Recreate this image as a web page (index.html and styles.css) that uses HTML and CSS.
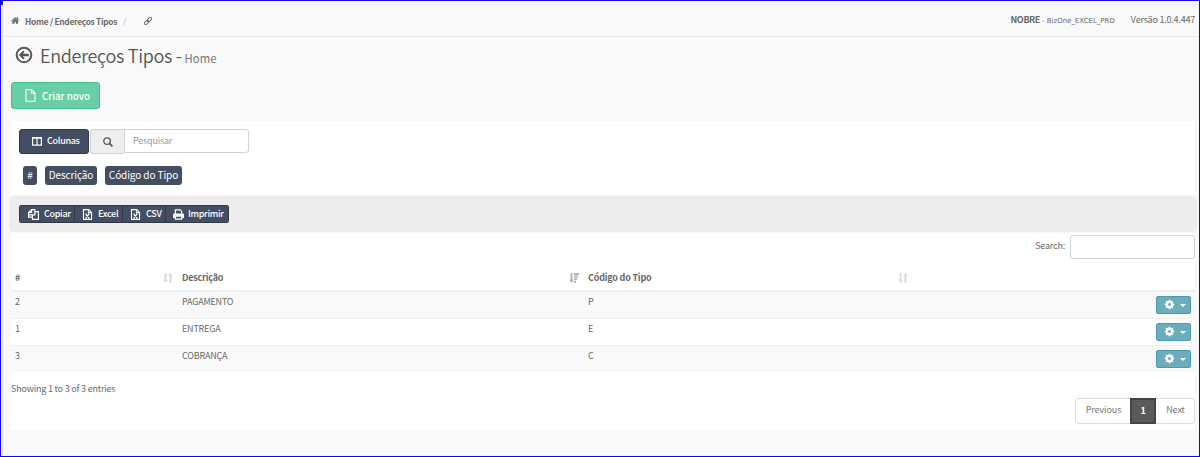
FILE: index.html
```html
<!DOCTYPE html>
<html lang="pt-BR">
<head>
<meta charset="utf-8">
<title>Endereços Tipos</title>
<link rel="stylesheet" href="styles.css">
</head>
<body>
<svg class="defs" width="0" height="0">
  <symbol id="home" viewBox="0 0 1792 1792"><path d="M1408 992v480q0 26-19 45t-45 19h-384v-384h-256v384h-384q-26 0-45-19t-19-45v-480q0-1 .5-3t.5-3l575-474 575 474q1 2 1 6zm223-69l-62 74q-8 9-21 11h-3q-13 0-21-7l-692-577-692 577q-12 8-24 7-13-2-21-11l-62-74q-8-10-7-23.500t11-21.500l719-599q32-26 76-26t76 26l244 204v-195q0-14 9-23t23-9h192q14 0 23 9t9 23v408l219 182q10 8 11 21.500t-7 23.500z"/></symbol>
  <symbol id="cog" viewBox="0 0 1792 1792"><path d="M1152 896q0-106-75-181t-181-75-181 75-75 181 75 181 181 75 181-75 75-181zm512-109v222q0 12-8 23t-20 13l-185 28q-19 54-39 91 35 50 107 138 10 12 10 25t-9 23q-27 37-99 108t-94 71q-12 0-26-9l-138-108q-44 23-91 38-16 136-29 186-7 28-36 28h-222q-14 0-24.500-8.500t-11.500-21.500l-28-184q-49-16-90-37l-141 107q-10 9-25 9-14 0-25-11-126-114-165-168-7-10-7-23 0-12 8-23 15-21 51-66.500t54-70.500q-27-50-41-99l-183-27q-13-2-21-12.500t-8-23.500v-222q0-12 8-23t19-13l186-28q14-46 39-92-40-57-107-138-10-12-10-24 0-10 9-23 26-36 98.500-107.500t94.500-71.500q13 0 26 10l138 107q44-23 91-38 16-136 29-186 7-28 36-28h222q14 0 24.500 8.500t11.500 21.500l28 184q49 16 90 37l142-107q9-9 24-9 13 0 25 10 129 119 165 170 7 8 7 22 0 12-8 23-15 21-51 66.500t-54 70.500q26 50 41 98l183 28q13 2 21 12.500t8 23.500z"/></symbol>
  <symbol id="sort" viewBox="0 0 10 10"><path d="M1.500 0h2v6.800h1.500L2.500 10 0 6.800h1.500zM6.500 10h2V3.200H10L7.500 0 5 3.200h1.500z"/></symbol>
  <symbol id="sort-desc" viewBox="0 0 10 10"><path d="M1.500 0h2v6.800h1.500L2.500 10 0 6.800h1.500zM5 0h5v2H5zM5 2.600h4v2H5zM5 5.300h3v2H5zM5 8h2v2H5z"/></symbol>
  <symbol id="excel" viewBox="0 0 10 11"><path d="M1 .6h5.200L9 3.400v7H1zM6 .6v3h3M3.300 5.100l3.200 3.800M6.500 5.100 3.300 8.900M2.900 9h1.400M5.500 9h1.400M2.900 5h1.400M5.500 5h1.400" fill="none" stroke="currentColor" stroke-width="1.200"/></symbol>
</svg>
<div class="page">
  <div class="rail"><i class="rail-head"></i><i></i><i></i><i></i><i></i><i></i><i></i><i></i><i></i><i></i><i></i><i></i></div>
  <div class="main">
    <header class="topbar">
      <nav class="crumbs">
        <svg class="i-home"><use href="#home"/></svg>
        <b>Home / Endereços Tipos</b><span class="slash">/</span>
        <svg class="i-link" viewBox="0 0 10 10"><g fill="none" stroke="currentColor" stroke-width="1.200" transform="rotate(-45 5 5)"><rect x="-.8" y="3.300" width="6.400" height="3.400" rx="1.700"/><rect x="4.400" y="3.300" width="6.400" height="3.400" rx="1.700"/></g></svg>
      </nav>
      <div class="env"><b>NOBRE</b><span class="db">- BizOne_EXCEL_PRD</span><span class="version">Versão 1.0.4.447</span></div>
    </header>
    <h1 class="title">
      <svg class="i-back" viewBox="0 0 18 18"><circle cx="9" cy="9" r="7.300" fill="none" stroke="currentColor" stroke-width="2"/><path d="M3.800 9 8.300 4.600l1.300 1.300-1.900 1.900h6v2.400h-6l1.900 1.900-1.300 1.300z"/></svg>
      <span class="name">Endereços Tipos -</span><small>Home</small>
    </h1>
    <button class="create"><svg class="i-file" viewBox="0 0 11 13"><path d="M1 .7h5.600L10 4.100v8.200H1zM6.500.7v3.500H10" fill="none" stroke="currentColor" stroke-width="1.100"/></svg><span>Criar novo</span></button>
    <section class="panel">
      <div class="filters">
        <button class="columns"><svg class="i-cols" viewBox="0 0 10 9"><path d="M.6.600h8.800v7.600H.6zM5 .6v7.600M.6 1.100h8.800" fill="none" stroke="currentColor" stroke-width="1.200"/></svg><span>Colunas</span></button>
        <div class="find"><span class="addon"><svg class="i-search" viewBox="0 0 10 10"><path d="M6.700 6.700 9.400 9.400" stroke="currentColor" stroke-width="1.700"/><circle cx="4.100" cy="4.100" r="3.300" fill="none" stroke="currentColor" stroke-width="1.300"/></svg></span><div class="field">Pesquisar</div></div>
      </div>
      <div class="tags"><span class="t1">#</span><span class="t2">Descrição</span><span class="t3">Código do Tipo</span></div>
      <div class="tools">
        <div class="group">
          <button class="g1"><svg viewBox="0 0 11 11"><path d="M3.600.6h3.200v5.300H.6V3.400zM3.600.6v2.800h-3M.6 5v3.200h3.900M7 2.600h3.400v7.800H4.500V6M7 2.600v3" fill="none" stroke="currentColor" stroke-width="1.200"/></svg><span>Copiar</span></button>
          <button class="g2"><svg><use href="#excel"/></svg><span>Excel</span></button>
          <button class="g3"><svg><use href="#excel"/></svg><span>CSV</span></button>
          <button class="g4"><svg viewBox="0 0 11 11"><path d="M2.300 5V.9h4.900l1.500 1.500V5" fill="none" stroke="currentColor" stroke-width="1.200"/><path d="M1.500 4.600h8Q11 4.600 11 6v3H9.300v1.700H1.700V9H0V6q0-1.400 1.500-1.400zM2.900 7.700v1.900h5.200V7.700z" fill-rule="evenodd"/></svg><span>Imprimir</span></button>
        </div>
      </div>
      <div class="search"><span>Search:</span><div class="box"></div></div>
      <div class="table">
        <div class="row head"><div class="c1">#<svg class="light"><use href="#sort"/></svg></div><div class="c2">Descrição<svg class="dark"><use href="#sort-desc"/></svg></div><div class="c3">Código do Tipo<svg class="light"><use href="#sort"/></svg></div></div>
        <div class="row odd"><div class="c1">2</div><div class="c2">PAGAMENTO</div><div class="c3">P</div><button class="action"><svg><use href="#cog"/></svg><i></i></button></div>
        <div class="row"><div class="c1">1</div><div class="c2">ENTREGA</div><div class="c3">E</div><button class="action"><svg><use href="#cog"/></svg><i></i></button></div>
        <div class="row odd"><div class="c1">3</div><div class="c2">COBRANÇA</div><div class="c3">C</div><button class="action"><svg><use href="#cog"/></svg><i></i></button></div>
      </div>
      <div class="info">Showing 1 to 3 of 3 entries</div>
      <div class="pager"><span class="prev">Previous</span><b>1</b><span class="next">Next</span></div>
    </section>
  </div>
</div>
</body>
</html>
```
FILE: styles.css
```css
* { box-sizing: border-box; }
body { margin: 0; font: 9px/14px "Noto Sans CJK SC", "Open Sans", sans-serif; letter-spacing: -.2px; color: #6a6a6a; }
button { margin: 0; padding: 0; font: inherit; letter-spacing: inherit; color: #fff; display: flex; align-items: center; white-space: nowrap; }
svg { display: block; flex: none; fill: currentColor; }
span, b { white-space: nowrap; }
.defs { position: absolute; }
.page { width: 1200px; height: 457px; border: 1px solid #1400ff; background: #f9f9f9; display: flex; overflow: hidden; }
.rail { width: 2px; background: #fbfbfb; border-right: 1px solid #e8e8e8; }
.rail i { display: block; height: 37.500px; border-bottom: 1px solid #e0e0e0; }
.rail .rail-head { height: 5px; width: 2px; background: #29303c; }
.main { flex: 1; display: flex; flex-direction: column; align-items: flex-start; }
.topbar { width: 100%; height: 36px; border-top: 3px solid #fff; border-bottom: 1px solid #eaeaea; box-shadow: inset 0 1px #eee; display: flex; justify-content: space-between; padding: 0 4px 0 8px; }
.crumbs { display: flex; align-items: center; height: 33px; font-size: 8.300px; letter-spacing: -.26px; }
.i-home { width: 9px; height: 9px; margin-right: 5px; }
.slash { margin: 0 18px 0 6px; color: #bbb; }
.i-link { width: 8px; height: 8px; }
.env { display: flex; align-items: center; height: 31px; font-size: 9px; letter-spacing: -.22px; }
.env b { letter-spacing: -.4px; }
.db { font-family: "DejaVu Sans", sans-serif; font-size: 7px; letter-spacing: 0; margin-left: 2px; padding-top: 2px; }
.version { margin-left: 16px; }
.title { margin: 0; height: 45px; display: flex; align-items: center; font-weight: 350; font-size: 18px; letter-spacing: -.3px; color: #555; padding: 0 0 7px 12px; }
.title .name { margin-top: -2px; }
.i-back { width: 18px; height: 18px; margin: -2px 7px 0 0; }
.title small { font-size: 11.300px; margin-left: 3px; padding-top: 3px; color: #777; font-weight: 400; letter-spacing: 0; }
.create { margin-left: 8px; width: 89px; height: 27px; background: #68cfa6; border: 1px solid #45bf8f; border-radius: 3px; padding: 1px 0 0 13px; font-size: 9.600px; font-weight: 500; letter-spacing: .05px; }
.i-file { width: 11px; height: 13px; margin: -1px 5px 0 0; }
.create span { padding-left: 1px; }
.panel { margin: 12px 0 0 8px; width: 1184px; height: 309px; background: #fff; display: flex; flex-direction: column; }
.filters { display: flex; padding: 8px 8px 0; gap: 1px; height: 45px; }
.columns { width: 70px; height: 25px; background: #434e62; border: 1px solid #2d3a48; border-radius: 3px; padding: 0 0 1px 12px; font-size: 9px; font-weight: 500; letter-spacing: -.3px; }
.i-cols { width: 10px; height: 9px; margin-right: 5px; }
.find { display: flex; align-items: flex-start; width: 159px; }
.addon { width: 34px; height: 25px; background: #eee; border: 1px solid #cfd3dd; border-right: 0; border-radius: 3px 0 0 3px; display: flex; align-items: center; justify-content: center; color: #555; }
.i-search { width: 10px; height: 10px; }
.field { flex: 1; height: 24px; border: 1px solid #cfd3dd; border-radius: 0 3px 3px 0; background: #fff; padding: 4px 8px; color: #999; }
.tags { display: flex; gap: 8px; padding-left: 12px; height: 31px; }
.tags span { height: 19px; border-radius: 3px; background: #434e62; color: #fff; font-size: 10px; line-height: 18px; text-align: center; letter-spacing: -.1px; }
.t1 { width: 14px; } .t2 { width: 52px; } .t3 { width: 77px; }
.tools { height: 34px; background: #ededed; border-radius: 2px; box-shadow: 0 0 3px #ccc; padding: 8px; }
.group { display: flex; width: 210px; height: 18px; border: 1px solid #2d3a48; border-radius: 2px; overflow: hidden; }
.group button { background: #434e62; border: 0; border-right: 1px solid #2d3a48; padding-left: 8px; font-weight: 500; letter-spacing: -.3px; }
.group svg { width: 11px; height: 11px; margin-right: 5px; }
.group .g1 { width: 55px; }
.group .g2 { width: 48px; padding-left: 7px; }
.group .g3 { width: 43px; padding-left: 7px; }
.group .g4 { width: 62px; border: 0; padding-left: 7px; }
.group .g4 svg { margin-right: 4px; }
.search { display: flex; justify-content: flex-end; gap: 5px; padding-top: 4px; height: 34px; line-height: 21px; }
.box { width: 125px; height: 24px; border: 1px solid #cfd3dd; border-radius: 3px; }
.row { height: 27px; display: flex; border-top: 1px solid #f0f0f0; padding: 2px 4px 0; }
.row.head { height: 25px; border: 0; padding-top: 5px; font-weight: 700; }
.row.odd { background: #f9f9f9; }
.head + .row { border-top: 2px solid #f0f0f0; height: 28px; }
.c1 { width: 167px; } .c2 { width: 406px; } .c3 { width: 329px; }
.c1, .c2, .c3 { display: flex; justify-content: space-between; line-height: 15px; }
.head svg { width: 10px; height: 10px; margin: 3px 9px 0 0; }
.light { color: #dcdcdc; } .dark { color: #b4b4b4; }
.action { width: 35px; height: 18px; margin: 2px 0 0 auto; background: #6badbc; border: 1px solid #4b9bac; border-radius: 2px; padding: 0 0 1px 7px; gap: 5px; }
.action svg { width: 11px; height: 11px; }
.action i { border: 3px solid transparent; border-top-color: #fff; border-bottom: 0; margin-top: 2px; }
.info { padding: 10px 0 0; height: 26px; }
.pager { margin-left: auto; width: 120px; height: 26px; display: flex; border: 1px solid #ddd; border-radius: 3px; line-height: 22px; text-align: center; color: #777; }
.prev { width: 54px; padding-left: 1px; letter-spacing: -.1px; } .next { width: 38px; padding-left: 1px; letter-spacing: -.1px; }
.pager b { width: 26px; height: 26px; margin-top: -1px; background: #5a5a5a; border: 2px solid #444; color: #fff; line-height: 21px; }
```
